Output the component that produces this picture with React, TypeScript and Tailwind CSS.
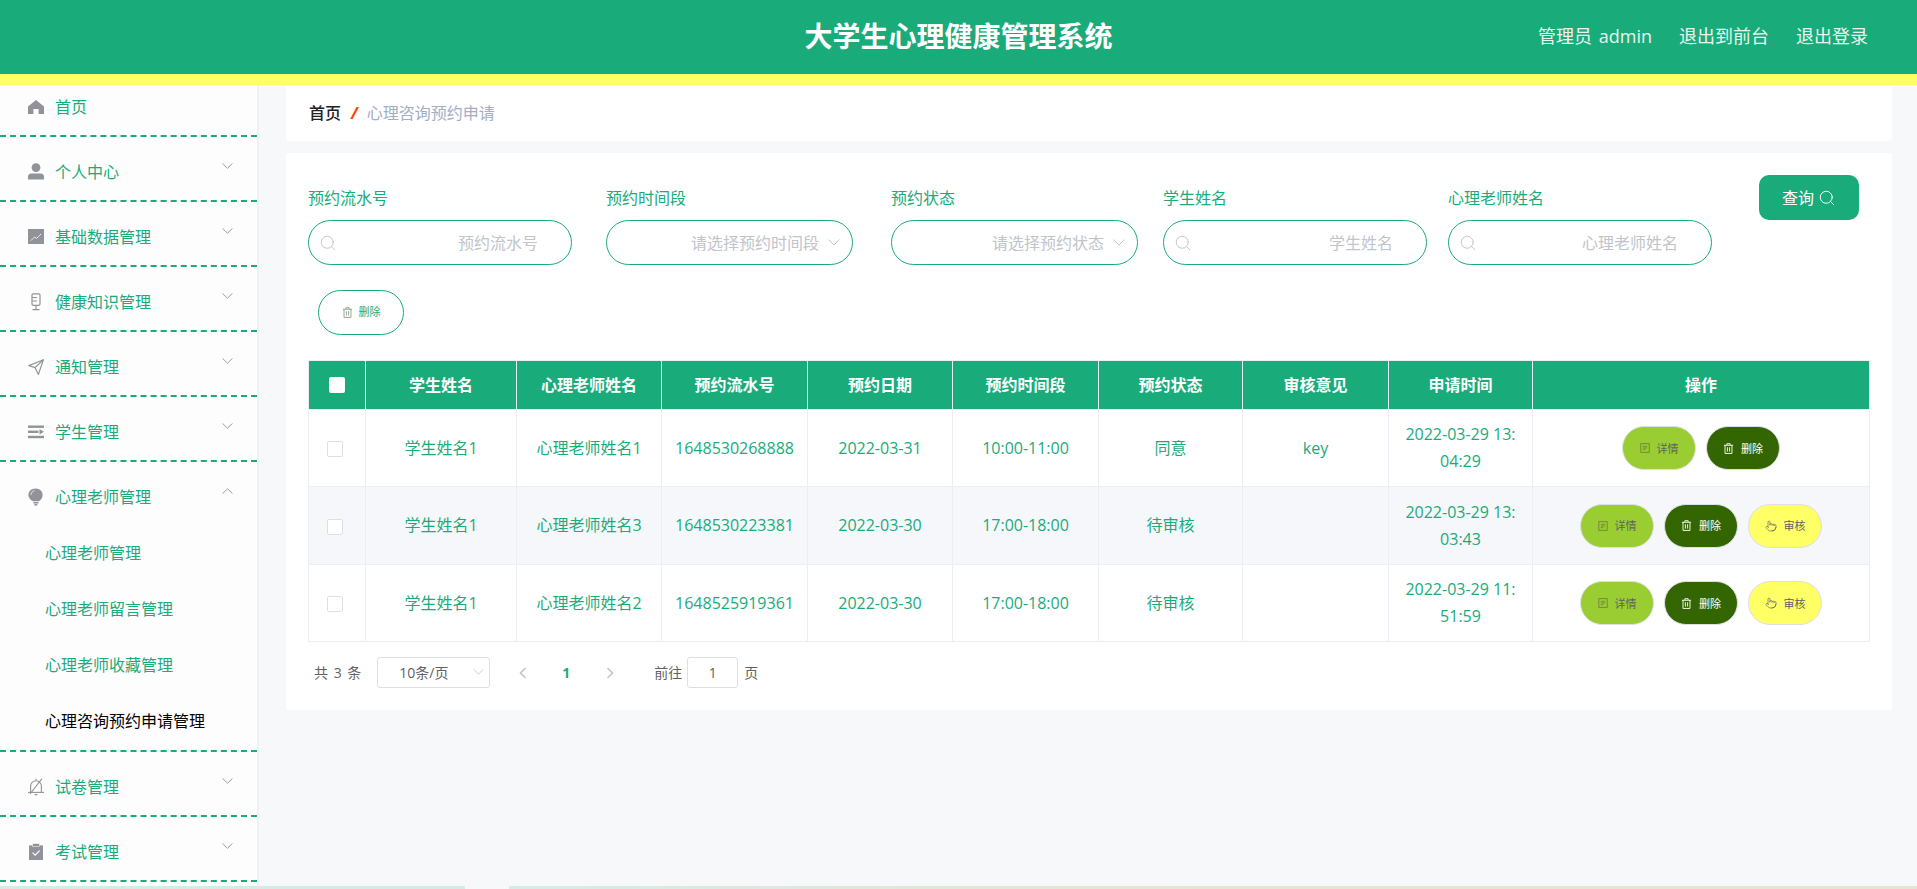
import React from "react";
import { Pointer, Search } from "lucide-react";

function Home() {
  return (
    <svg viewBox="0 0 16 16" className="w-4 h-4 shrink-0" fill="#909399">
      <path d="M8 1 L16 7.6 V15 H10.6 V10 H5.4 V15 H0 V7.6 Z" />
    </svg>
  );
}
function Person() {
  return (
    <svg viewBox="0 0 16 18" className="w-4 h-[18px] shrink-0" fill="#909399">
      <circle cx="8" cy="4.6" r="4.4" />
      <path d="M0 13.5 C0 11.6 1.6 10.6 3.4 10.6 H12.6 C14.4 10.6 16 11.6 16 13.5 V16.6 H0 Z" />
    </svg>
  );
}
function Chart() {
  return (
    <svg viewBox="0 0 16 16" className="w-4 h-4 shrink-0">
      <rect width="16" height="15" fill="#909399" />
      <path d="M3 11.5 L6.5 8 L8.5 9.5 L13 5" stroke="#fff" strokeWidth="1" strokeDasharray="2 .5" fill="none" />
    </svg>
  );
}
function Mic() {
  return (
    <svg viewBox="0 0 16 18" className="w-4 h-[18px] shrink-0" fill="none" stroke="#909399" strokeWidth="1.2">
      <rect x="4" y="0.8" width="8" height="11.5" rx="1.2" />
      <path d="M4 4.5 H9 M4 8 H9" />
      <path d="M8 12.5 V16 M4.5 16.6 H11.5" />
    </svg>
  );
}
function Plane() {
  return (
    <svg viewBox="0 0 16 16" className="w-4 h-4 shrink-0" fill="none" stroke="#909399" strokeWidth="1.2" strokeLinejoin="round">
      <path d="M15.4 0.8 L0.8 6.6 L7 8.6 L10.4 15.4 Z" />
      <path d="M7 8.6 L15.4 0.8" />
    </svg>
  );
}
function Oper() {
  return (
    <svg viewBox="0 0 16 14" className="w-4 h-[14px] shrink-0" fill="#909399">
      <rect y="0.5" width="16" height="2.4" />
      <rect y="5.6" width="10.5" height="2.4" />
      <path d="M11.5 4.2 L16 6.8 L11.5 9.4 Z" />
      <rect y="10.8" width="16" height="2.4" />
    </svg>
  );
}
function Bulb() {
  return (
    <svg viewBox="0 0 16 18" className="w-4 h-[18px] shrink-0" fill="#909399">
      <path d="M7.5 0.4 C11.6 0.4 14.6 3.2 14.6 6.9 C14.6 9.8 12.8 11.8 11 13.2 H5 C2.6 11.8 0.4 9.8 0.4 6.9 C0.4 3.2 3.4 0.4 7.5 0.4 Z" />
      <path d="M5.4 14 H10.4 V15.4 H5.4 Z M6.4 16 H9.4 V17.4 H6.4 Z" />
      <path d="M3 7 C3 4.6 4.6 3 6.6 2.6" stroke="#fff" strokeWidth=".7" fill="none" />
    </svg>
  );
}
function BellOff() {
  return (
    <svg viewBox="0 0 18 18" className="w-[18px] h-[18px] shrink-0 -mx-px" fill="none" stroke="#909399" strokeWidth="1.1">
      <path d="M1 14.4 H17" />
      <path d="M3.6 14.4 V8.2 C3.6 5 6 2.8 9 2.8 C12 2.8 14.4 5 14.4 8.2 V14.4" />
      <path d="M9 0.8 V2.6 M7.6 16.6 H10.4" />
      <path d="M14.8 0.8 L3 16" />
    </svg>
  );
}
function Claim() {
  return (
    <svg viewBox="0 0 16 18" className="w-4 h-[18px] shrink-0">
      <path d="M1 2.4 H15 V17 H1 Z" fill="#909399" />
      <rect x="4.6" y="0.6" width="6.8" height="2.8" fill="#909399" stroke="#fdfdfd" strokeWidth=".5" />
      <path d="M4.6 9.6 L7.2 12.2 L11.6 7.6" stroke="#fff" strokeWidth="1.2" fill="none" />
    </svg>
  );
}
function Chevron({ up }: { up?: boolean }) {
  return (
    <svg viewBox="0 0 11 6" className="w-[11px] h-[6px]" fill="none" stroke="#909399" strokeWidth=".9">
      <path d={up ? "M0.5 5.6 L5.5 0.8 L10.5 5.6" : "M0.5 0.4 L5.5 5.2 L10.5 0.4"} />
    </svg>
  );
}
function Trash({ color }: { color: string }) {
  return (
    <svg viewBox="0 0 12 12" className="w-[11px] h-[11px] shrink-0" fill="none" stroke={color} strokeWidth="1">
      <path d="M1 2.5 H11 M4.2 2.3 V0.8 H7.8 V2.3" />
      <path d="M2.2 2.5 V11.4 H9.8 V2.5" />
      <path d="M4.8 4.6 V9.4 M7.2 4.6 V9.4" />
    </svg>
  );
}
function Tickets({ color }: { color: string }) {
  return (
    <svg viewBox="0 0 12 12" className="w-[10px] h-[10px] shrink-0" fill="none" stroke={color} strokeWidth="1">
      <rect x="1" y="0.8" width="10" height="10.4" />
      <path d="M3.4 4 H8.6 M3.4 6 H8.6 M3.4 8 H6.4" />
    </svg>
  );
}

const menu: { name: string; icon: React.ReactNode; open?: boolean; noArrow?: boolean }[] = [
  { name: "首页", icon: <Home />, noArrow: true },
  { name: "个人中心", icon: <Person /> },
  { name: "基础数据管理", icon: <Chart /> },
  { name: "健康知识管理", icon: <Mic /> },
  { name: "通知管理", icon: <Plane /> },
  { name: "学生管理", icon: <Oper /> },
  { name: "心理老师管理", icon: <Bulb />, open: true },
  { name: "试卷管理", icon: <BellOff /> },
  { name: "考试管理", icon: <Claim /> },
];

const subs = ["心理老师管理", "心理老师留言管理", "心理老师收藏管理", "心理咨询预约申请管理"];

function Sidebar() {
  return (
    <aside className="w-[259px] shrink-0 bg-[#fdfdfd] border-r-2 border-[#f1f1f3] overflow-hidden">
      <div className="-mt-[13px]">
        {menu.map((m) => (
          <div key={m.name} className="border-b-2 border-dashed border-[#1aab7b]">
            <div className="h-[63px] flex items-center pl-[28px] pr-[24px] pt-[6px] text-[16px] text-[#1aab7b]">
              <div className="w-4 flex justify-center">{m.icon}</div>
              <span className="ml-[11px]">{m.name}</span>
              {!m.noArrow && (
                <span className="ml-auto mb-[12px] flex">
                  <Chevron up={m.open} />
                </span>
              )}
            </div>
            {m.open && (
              <div className="pb-px">
                {subs.map((s, i) => (
                  <div
                    key={s}
                    className={
                      "h-[56px] flex items-center pl-[45px] text-[16px] " +
                      (i === 3 ? "text-black" : "text-[#1aab7b]")
                    }
                  >
                    {s}
                  </div>
                ))}
              </div>
            )}
          </div>
        ))}
      </div>
    </aside>
  );
}

function TextField({ label, ph, w, cls }: { label: string; ph: string; w: string; cls: string }) {
  return (
    <div className={w + " " + cls}>
      <div className="h-[45px] flex items-center text-[16px] text-[#1aab7b]">{label}</div>
      <div className="h-[45px] rounded-[22.5px] border border-[#1aab7b] flex items-center pl-[10px] pr-[33px] bg-white">
        <Search className="w-[18px] h-[18px] shrink-0 text-[#c0c4cc]" strokeWidth={1.3} />
        <input
          placeholder={ph}
          className="flex-1 min-w-0 text-right text-[16px] outline-none placeholder:text-[#c0c4cc]"
        />
      </div>
    </div>
  );
}

function SelectField({ label, ph, w, cls }: { label: string; ph: string; w: string; cls: string }) {
  return (
    <div className={w + " " + cls}>
      <div className="h-[45px] flex items-center text-[16px] text-[#1aab7b]">{label}</div>
      <div className="h-[45px] rounded-[22.5px] border border-[#1aab7b] flex items-center justify-end pr-[12px] bg-white">
        <span className="text-[16px] text-[#c0c4cc]">{ph}</span>
        <svg viewBox="0 0 12 7" className="w-[12px] h-[7px] ml-[9px]" fill="none" stroke="#c0c4cc" strokeWidth="1">
          <path d="M0.5 0.5 L6 6 L11.5 0.5" />
        </svg>
      </div>
    </div>
  );
}

const rows = [
  { t: "心理老师姓名1", no: "1648530268888", d: "2022-03-31", s: "10:00-11:00", st: "同意", op: "key", a: "2022-03-29 13:", b: "04:29", audit: false },
  { t: "心理老师姓名3", no: "1648530223381", d: "2022-03-30", s: "17:00-18:00", st: "待审核", op: "", a: "2022-03-29 13:", b: "03:43", audit: true },
  { t: "心理老师姓名2", no: "1648525919361", d: "2022-03-30", s: "17:00-18:00", st: "待审核", op: "", a: "2022-03-29 11:", b: "51:59", audit: true },
];

const heads: [string, string][] = [
  ["学生姓名", "w-[151px]"],
  ["心理老师姓名", "w-[145px]"],
  ["预约流水号", "w-[146px]"],
  ["预约日期", "w-[145px]"],
  ["预约时间段", "w-[146px]"],
  ["预约状态", "w-[144px]"],
  ["审核意见", "w-[146px]"],
  ["申请时间", "w-[144px]"],
  ["操作", "w-[337px]"],
];

const btn = "w-[74px] h-[44px] rounded-[22px] border border-[#dcdfe6] flex items-center justify-center gap-[7px] text-[11px]";

function Table() {
  return (
    <table className="table-fixed w-[1561px] border-collapse mt-[25px]">
      <thead>
        <tr className="h-[49px] bg-[#1aab7b]">
          <th className="w-[57px] border border-[#ebeef5] border-r-white">
            <div className="w-4 h-4 bg-white rounded-[2px] mx-auto" />
          </th>
          {heads.map(([h, w]) => (
            <th key={h} className={w + " border border-[#ebeef5] border-l-white text-[16px] font-bold text-white"}>
              {h}
            </th>
          ))}
        </tr>
      </thead>
      <tbody>
        {rows.map((r, i) => {
          const td =
            "border border-[#ebeef5] text-center text-[16px] text-[#1aab7b] leading-[27px] px-[10px] " +
            (i === 1 ? "h-[78px]" : "h-[77px]");
          return (
            <tr key={r.no} className={i === 1 ? "bg-[#f5f7fa]" : "bg-white"}>
              <td className={td}>
                <div className="w-4 h-4 bg-white border border-[#dcdfe6] rounded-[2px] mx-auto -translate-x-[2px] translate-y-px" />
              </td>
              <td className={td}>学生姓名1</td>
              <td className={td}>{r.t}</td>
              <td className={td + " !px-0"}>{r.no}</td>
              <td className={td}>{r.d}</td>
              <td className={td}>{r.s}</td>
              <td className={td}>{r.st}</td>
              <td className={td}>{r.op}</td>
              <td className={td + " !px-0"}>
                {r.a}
                <br />
                {r.b}
              </td>
              <td className={td}>
                <div className="flex justify-center gap-[10px]">
                  <div className={btn + " bg-[#9acd32] text-[#606266]"}>
                    <Tickets color="#6b7f3a" />
                    详情
                  </div>
                  <div className={btn + " bg-[#336600] text-white"}>
                    <Trash color="#fff" />
                    删除
                  </div>
                  {r.audit && (
                    <div className={btn + " bg-[#ffff66] text-[#606266]"}>
                      <Pointer className="w-[12px] h-[12px]" strokeWidth={1.3} />
                      审核
                    </div>
                  )}
                </div>
              </td>
            </tr>
          );
        })}
      </tbody>
    </table>
  );
}

function Pagination() {
  return (
    <div className="mt-[15px] h-[31px] flex items-center text-[14px] text-[#606266]">
      <span className="ml-[6px] pb-px tracking-[1px]">共 3 条</span>
      <div className="ml-[15px] w-[113px] h-[31px] rounded-[3px] border border-[#dcdfe6] flex items-center pl-[21px] pr-[3px] pb-px">
        <span>10条/页</span>
        <svg viewBox="0 0 12 7" className="w-[11px] h-[6px] ml-auto mr-[2px]" fill="none" stroke="#c0c4cc" strokeWidth="1">
          <path d="M0.5 0.5 L6 6 L11.5 0.5" />
        </svg>
      </div>
      <svg viewBox="0 0 8 12" className="w-[8px] h-[12px] ml-[29px]" fill="none" stroke="#c0c4cc" strokeWidth="1.6">
        <path d="M6.5 1 L1.5 6 L6.5 11" />
      </svg>
      <span className="ml-[35px] w-[8px] pb-px text-center font-bold text-[#1aab7b]">1</span>
      <svg viewBox="0 0 8 12" className="w-[8px] h-[12px] ml-[36px]" fill="none" stroke="#c0c4cc" strokeWidth="1.6">
        <path d="M1.5 1 L6.5 6 L1.5 11" />
      </svg>
      <span className="ml-[40px] pb-px">前往</span>
      <div className="ml-[5px] w-[51px] h-[31px] rounded-[3px] border border-[#dcdfe6] flex items-center justify-center pb-px">1</div>
      <span className="ml-[6px] pb-px">页</span>
    </div>
  );
}

export default function App() {
  return (
    <div className="h-[889px] w-[1917px] overflow-hidden flex flex-col bg-[#f6f8fa] font-['Open_Sans','Noto_Sans_CJK_SC',sans-serif]">
      <header className="h-[85px] shrink-0 bg-[#1aab7b] border-b-[11px] border-[#ffff66] flex items-center pb-[2px]">
        <div className="flex-1" />
        <h1 className="text-[28px] font-bold text-white">大学生心理健康管理系统</h1>
        <div className="flex-1 flex justify-end">
          <div className="flex gap-[27px] mr-[49px] text-[18px] text-[#e8f5ef] [word-spacing:2px]">
            <span>管理员 admin</span>
            <span>退出到前台</span>
            <span>退出登录</span>
          </div>
        </div>
      </header>
      <div className="flex-1 min-h-0 flex">
        <Sidebar />
        <main className="flex-1 min-w-0 pl-[27px] pr-[25px]">
          <div className="h-[56px] bg-white rounded-b-[4px] flex items-center pl-[23px] text-[16px]">
            <span className="text-[#222] font-medium">首页</span>
            <span className="ml-[10px] mr-[9px] text-[#ff3d00] font-bold italic">/</span>
            <span className="text-[#a3adc6]">心理咨询预约申请</span>
          </div>
          <section className="mt-[12px] h-[557px] bg-white rounded-[3px] px-[22px] pt-[22px]">
            <div className="flex items-start">
              <TextField label="预约流水号" ph="预约流水号" w="w-[264px]" cls="" />
              <SelectField label="预约时间段" ph="请选择预约时间段" w="w-[247px]" cls="ml-[34px]" />
              <SelectField label="预约状态" ph="请选择预约状态" w="w-[247px]" cls="ml-[38px]" />
              <TextField label="学生姓名" ph="学生姓名" w="w-[264px]" cls="ml-[25px]" />
              <TextField label="心理老师姓名" ph="心理老师姓名" w="w-[264px]" cls="ml-[21px]" />
              <button className="ml-[47px] w-[100px] h-[45px] rounded-[10px] bg-[#1aab7b] text-white text-[16px] flex items-center justify-center gap-[4px]">
                查询
                <Search className="w-[18px] h-[18px]" strokeWidth={1.3} />
              </button>
            </div>
            <button className="mt-[25px] ml-[10px] w-[86px] h-[45px] rounded-[22.5px] border border-[#1aab7b] bg-white flex items-center justify-center gap-[6px] text-[11px] text-[#1aab7b]">
              <Trash color="#8aa08e" />
              删除
            </button>
            <Table />
            <Pagination />
          </section>
        </main>
      </div>
      <div className="h-[3px] shrink-0 flex">
        <div className="w-[465px] bg-[#d7ebe5]" />
        <div className="w-[44px]" />
        <div className="flex-1 bg-gradient-to-r from-[#d7ebe5] via-[#e8e4d4] to-[#e8e4d4]" />
      </div>
    </div>
  );
}
